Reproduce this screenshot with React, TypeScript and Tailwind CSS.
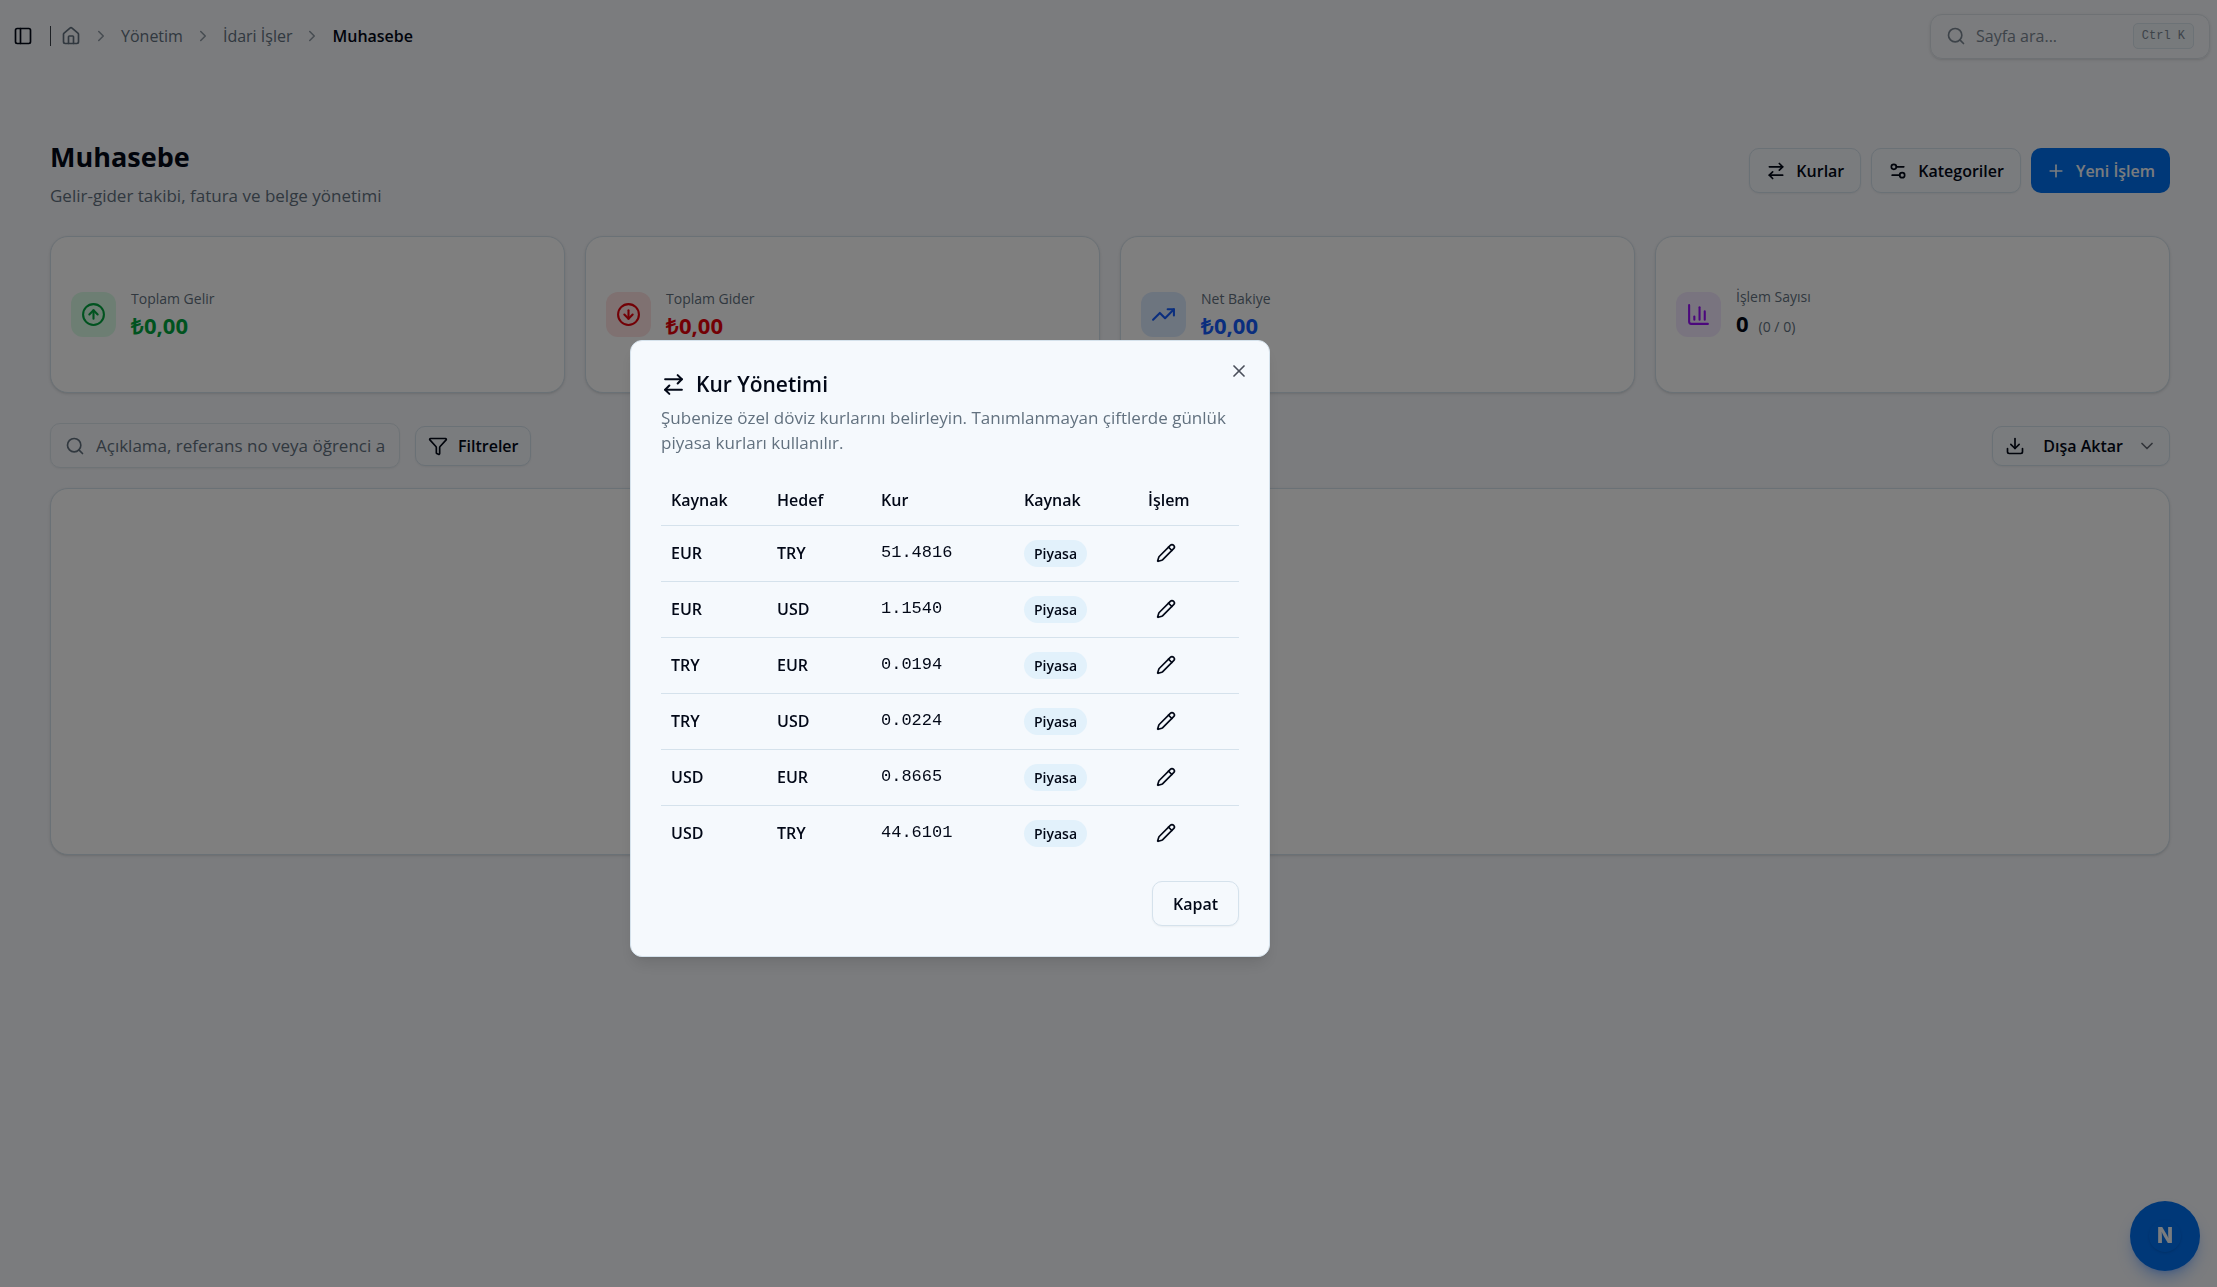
import React, { useState } from 'react'
import {
  ArrowRightLeft,
  ChartColumn,
  ChevronDown,
  ChevronRight,
  CircleArrowDown,
  CircleArrowUp,
  Download,
  Funnel,
  House,
  PanelLeft,
  Pencil,
  Plus,
  Search,
  Settings2,
  TrendingUp,
  X,
} from 'lucide-react'

const outline = "flex items-center rounded-[10px] border border-[#d5e2ec] bg-[#f5f9fd] font-semibold shadow-xs"

const crumbs = ['Yönetim', 'İdari İşler']

const stats = [
  { label: 'Toplam Gelir', value: '₺0,00', extra: '', icon: CircleArrowUp, tile: 'bg-green-100 text-green-600', color: 'text-green-600' },
  { label: 'Toplam Gider', value: '₺0,00', extra: '', icon: CircleArrowDown, tile: 'bg-red-100 text-red-600', color: 'text-red-600' },
  { label: 'Net Bakiye', value: '₺0,00', extra: '', icon: TrendingUp, tile: 'bg-blue-100 text-blue-600', color: 'text-blue-600' },
  { label: 'İşlem Sayısı', value: '0', extra: '(0 / 0)', icon: ChartColumn, tile: 'bg-purple-100 text-purple-600', color: '' },
]

const rates = [
  { from: 'EUR', to: 'TRY', rate: '51.4816' },
  { from: 'EUR', to: 'USD', rate: '1.1540' },
  { from: 'TRY', to: 'EUR', rate: '0.0194' },
  { from: 'TRY', to: 'USD', rate: '0.0224' },
  { from: 'USD', to: 'EUR', rate: '0.8665' },
  { from: 'USD', to: 'TRY', rate: '44.6101' },
]

function TopBar() {
  return (
    <header className="flex h-[72px] items-center justify-between pl-[13px] pr-[7px]">
      <div className="flex items-center">
        <button aria-label="Menü"><PanelLeft className="size-5" /></button>
        <div className="ml-[17px] h-5 w-px bg-[#3b4148]" />
        <nav className="ml-[10px] flex items-center gap-[10px] text-[#62717f]">
          <a href="#" aria-label="Ana sayfa"><House className="size-5" /></a>
          {crumbs.map((crumb) => (
            <React.Fragment key={crumb}>
              <ChevronRight className="mx-px size-[18px] opacity-70" />
              <a href="#">{crumb}</a>
            </React.Fragment>
          ))}
          <ChevronRight className="mx-px size-[18px] opacity-70" />
          <span className="font-semibold text-[#020817]">Muhasebe</span>
        </nav>
      </div>
      <button className="flex h-[45px] w-[280px] items-center rounded-xl border border-[#dde3e9] px-[15px] text-[#7b8793] shadow-sm">
        <Search className="size-5" />
        <span className="ml-[10px]">Sayfa ara...</span>
        <kbd className="ml-auto rounded-[5px] border border-[#d9e4ec] bg-[#eef4f8] px-2 py-[3px] font-['Liberation_Mono',monospace] text-[12px] leading-[18px]">Ctrl K</kbd>
      </button>
    </header>
  )
}

function StatCards() {
  return (
    <div className="mt-7 grid grid-cols-4 gap-5">
      {stats.map(({ label, value, extra, icon: Icon, tile, color }) => (
        <div key={label} className="flex h-[157px] items-center gap-[15px] rounded-[18px] border border-[#d5e2ec] bg-white px-5 shadow-sm">
          <div className={`flex size-[45px] items-center justify-center rounded-xl ${tile}`}>
            <Icon className="size-[25px]" />
          </div>
          <div>
            <p className="text-[14px] leading-5 text-[#62717f]">{label}</p>
            <p className={`text-[22px] font-bold leading-8 ${color}`}>
              {value}
              {extra && <span className="ml-[10px] text-[14px] font-normal text-[#62717f]">{extra}</span>}
            </p>
          </div>
        </div>
      ))}
    </div>
  )
}

function RateDialog({ onClose }: { onClose: () => void }) {
  return (
    <div className="fixed inset-0 bg-black/50">
      <div role="dialog" aria-labelledby="rate-title" className="absolute left-[630px] top-[340px] w-[640px] rounded-xl border border-[#d5e2ec] bg-[#f5f9fd] p-[30px] shadow-lg">
        <button aria-label="Kapat" onClick={onClose} className="absolute right-5 top-5 opacity-70">
          <X className="size-5" />
        </button>
        <h2 id="rate-title" className="flex items-center gap-[10px] text-[21px] font-semibold leading-[26px]">
          <ArrowRightLeft className="size-[25px]" />
          Kur Yönetimi
        </h2>
        <p className="mt-2 text-[17px] leading-[25px] text-[#62717f]">
          Şubenize özel döviz kurlarını belirleyin. Tanımlanmayan çiftlerde günlük piyasa kurları kullanılır.
        </p>
        <table className="mt-5 w-full table-fixed text-left">
          <thead>
            <tr className="h-[50px] border-b border-[#d5e2ec]">
              <th className="w-[106px] px-[10px] font-semibold">Kaynak</th>
              <th className="w-[104px] px-[10px] font-semibold">Hedef</th>
              <th className="w-[143px] px-[10px] font-semibold">Kur</th>
              <th className="w-[124px] px-[10px] font-semibold">Kaynak</th>
              <th className="px-[10px] font-semibold">İşlem</th>
            </tr>
          </thead>
          <tbody>
            {rates.map((r) => (
              <tr key={r.from + r.to} className="h-14 border-b border-[#d5e2ec] last:border-0">
                <td className="px-[10px] font-semibold">{r.from}</td>
                <td className="px-[10px] font-semibold">{r.to}</td>
                <td className="px-[10px] font-['Liberation_Mono',monospace] text-[17px]">{r.rate}</td>
                <td className="px-[10px]">
                  <span className="inline-block rounded-full bg-[#e2f1fb] px-[10px] text-[14px] font-semibold leading-[27px]">Piyasa</span>
                </td>
                <td className="px-[10px]">
                  <button aria-label="Düzenle" className="flex size-9 items-center justify-center"><Pencil className="size-5" /></button>
                </td>
              </tr>
            ))}
          </tbody>
        </table>
        <div className="mt-5 flex justify-end">
          <button onClick={onClose} className={`${outline} h-[45px] px-5`}>Kapat</button>
        </div>
      </div>
    </div>
  )
}

export default function App() {
  const [open, setOpen] = useState(true)

  return (
    <div className="min-h-screen bg-[#f6f8fc] font-['Open_Sans',sans-serif] text-[16px] leading-6 text-[#020817]">
      <TopBar />
      <main className="pl-[50px] pr-[47px] pt-[65px]">
        <div className="flex items-start justify-between">
          <div>
            <h1 className="text-[27px] font-bold leading-10">Muhasebe</h1>
            <p className="mt-[6px] text-[17px] leading-[25px] text-[#62717f]">Gelir-gider takibi, fatura ve belge yönetimi</p>
          </div>
          <div className="mt-[11px] flex gap-[10px]">
            <button onClick={() => setOpen(true)} className={`${outline} h-[45px] gap-[10px] px-4`}>
              <ArrowRightLeft className="size-5" />
              Kurlar
            </button>
            <button className={`${outline} h-[45px] gap-[10px] px-4`}>
              <Settings2 className="size-5" />
              Kategoriler
            </button>
            <button className="flex h-[45px] items-center gap-[10px] rounded-[10px] bg-[#0070f0] px-[15px] font-semibold text-[#f5f9fd]">
              <Plus className="size-5" />
              Yeni İşlem
            </button>
          </div>
        </div>
        <StatCards />
        <div className="mt-[30px] flex items-center justify-between">
          <div className="flex items-center gap-[15px]">
            <label className="flex h-[45px] w-[350px] items-center gap-[11px] rounded-[10px] border border-[#dde6ed] px-[14px] shadow-xs">
              <Search className="size-5 shrink-0 text-[#62717f]" />
              <input
                aria-label="Ara"
                className="w-full min-w-0 bg-transparent text-[17px] outline-none placeholder:text-[#62717f]"
                placeholder="Açıklama, referans no veya öğrenci adı ile ara..."
              />
            </label>
            <button className={`${outline} h-10 gap-[10px] px-3`}>
              <Funnel className="size-5" />
              Filtreler
            </button>
          </div>
          <button className={`${outline} h-10 px-3`}>
            <Download className="size-5" />
            <span className="ml-[18px] mr-[14px]">Dışa Aktar</span>
            <ChevronDown className="size-5 opacity-60" />
          </button>
        </div>
        <div className="mt-5 h-[367px] rounded-[18px] border border-[#d5e2ec] bg-white shadow-sm" />
      </main>
      <button className="fixed bottom-4 right-[17px] flex size-[70px] items-center justify-center rounded-full bg-[#0070f0] shadow-lg shadow-blue-500/40">
        <span className="flex size-8 items-center justify-center rounded-full font-['Inter',sans-serif] text-[21px] font-extrabold text-[#f5f9fd] shadow-sm">N</span>
      </button>
      {open && <RateDialog onClose={() => setOpen(false)} />}
    </div>
  )
}
